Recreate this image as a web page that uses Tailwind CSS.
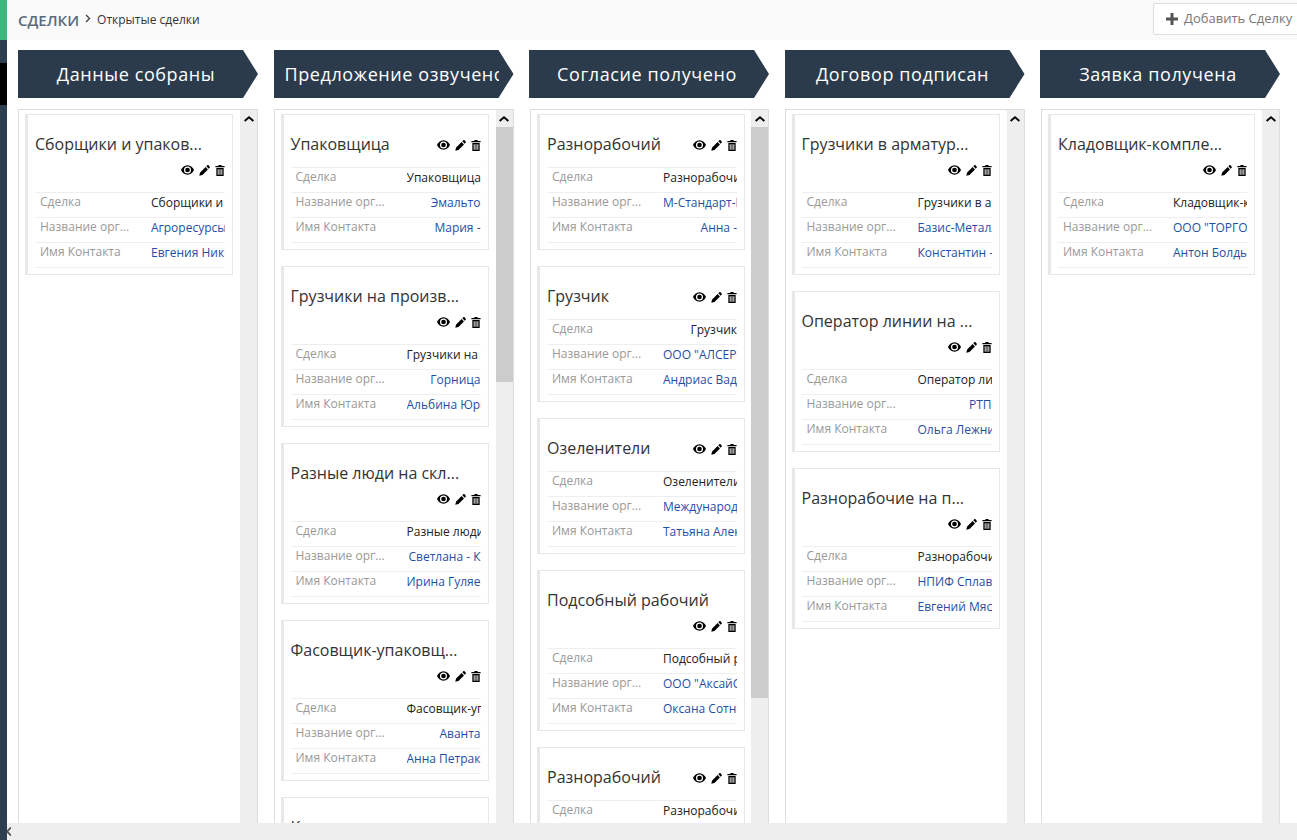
<!DOCTYPE html>
<html lang="ru">

<head>
    <meta charset="UTF-8">
    <meta name="viewport" content="width=device-width, initial-scale=1.0">
    <script src="https://cdn.jsdelivr.net/npm/@tailwindcss/browser@4"></script>
    <title>Сделки</title>
</head>

<body class="h-screen overflow-hidden bg-white font-['Open_Sans',sans-serif] flex">
    <svg class="hidden">
        <symbol id="i-eye" viewBox="0 0 14 10"><path fill-rule="evenodd" d="M7 0C3.6 0 1.1 2.6 0 5c1.1 2.4 3.6 5 7 5s5.900-2.600 7-5C12.900 2.600 10.400 0 7 0zm0 8.800A3.800 3.800 0 1 1 7 1.200a3.800 3.800 0 0 1 0 7.600z"/><circle cx="7" cy="5" r="2.500"/></symbol>
        <symbol id="i-pen" viewBox="0 0 12 12"><path d="M9 .4c.4-.4 1-.4 1.400 0l1.200 1.200c.4.4.4 1 0 1.400l-1 1L8 1.400zM7.200 2.200l2.600 2.600-6 6L.3 11.700l.9-3.500z"/></symbol>
        <symbol id="i-trash" viewBox="0 0 10 12"><path fill-rule="evenodd" d="M3.500 0h3l.5 1h3v1.500H0V1h3zM1 3.300h8V12H1zm1.500 1.200v6h1v-6zm2 0v6h1v-6zm2 0v6h1v-6z"/></symbol>
        <symbol id="i-up" viewBox="0 0 10 6"><path d="M5 0l5 4.300-1.300 1.400L5 2.500 1.300 5.700 0 4.300z"/></symbol>
    </svg>

    <!-- Боковая полоса -->
    <div class="w-[7px] shrink-0 flex flex-col bg-[#2c3e50]">
        <div class="h-[40px] bg-[#3fb77c]"></div>
        <div class="h-[23px]"></div>
        <div class="h-[42px] bg-black"></div>
    </div>

    <div class="flex-1 min-w-0 flex flex-col">
        <!-- Шапка -->
        <div class="h-[40px] shrink-0 bg-[#fafafa] flex items-center pl-[11px]">
            <span class="text-[15px] font-semibold text-[#5b6b7b]">СДЕЛКИ</span>
            <svg class="w-[6px] h-[9px] ml-[6px] mb-[3px] text-[#444]" viewBox="0 0 6 9" fill="none" stroke="currentColor" stroke-width="1.400"><path d="M1 1l3.500 3.500L1 8"/></svg>
            <span class="text-[12px] text-[#333] ml-[6px]">Открытые сделки</span>
            <button class="ml-auto -mr-[10px] mb-[3px] w-[154px] h-[32px] shrink-0 bg-white border border-[#ddd] rounded-[2px] flex items-center pl-[12px] text-[13px] text-[#777] whitespace-nowrap">
                <svg class="w-[12px] h-[12px] mr-[6px] text-[#555]" viewBox="0 0 12 12" fill="currentColor"><path d="M4.500 0h3v4.500H12v3H7.500V12h-3V7.500H0v-3h4.500z"/></svg>
                Добавить Сделку
            </button>
        </div>

        <!-- Колонки -->
        <div class="flex-1 min-h-0 flex gap-[15.5px] pl-[11px] pt-[10px]">

            <!-- Данные собраны -->
            <div class="w-[240px] shrink-0 flex flex-col">
                <div class="h-[48px] shrink-0 bg-[#2c3b4c] [clip-path:polygon(0_0,225px_0,240px_50%,225px_100%,0_100%)] pl-[11px]">
                    <div class="w-[214px] overflow-hidden whitespace-nowrap text-center text-[18px] leading-[48px] font-medium tracking-[0.6px] text-white">Данные собраны</div>
                </div>
                <div class="flex-1 min-h-0 mt-[11px] flex border border-b-0 border-[#ddd] overflow-hidden">
                    <div class="flex-1 min-w-0 pt-[4px] pl-[6px] pr-[7px] flex flex-col gap-[16px]">
                        <div class="shrink-0 bg-white border border-[#e8e8e8] border-l-[3px] pt-[17px] pl-[7px] pr-[7px] pb-[6px]">
                            <div class="flex flex-wrap justify-between items-center gap-y-[1px] mb-[11px]">
                                <div class="text-[16px] leading-[24px] text-[#333] whitespace-nowrap">Сборщики и упаков...</div>
                                <div class="ml-auto h-[24px] pt-[2px] flex items-center gap-[5px] text-[#333]"><svg class="w-[13px] h-[10px]"><use href="#i-eye"/></svg><svg class="w-[11px] h-[11px]"><use href="#i-pen"/></svg><svg class="w-[10px] h-[11px]"><use href="#i-trash"/></svg></div>
                            </div>
                            <div class="border-b border-[#eee] text-[12px]">
                                <div class="h-[25px] border-t border-[#eee] flex justify-between items-center"><span class="pl-[5px] pb-[6px] text-[#999]">Сделка</span><span class="w-[74px] pb-[4px] text-right overflow-hidden whitespace-nowrap text-[#222]">Сборщики и упаковщики</span></div>
                                <div class="h-[25px] border-t border-[#eee] flex justify-between items-center"><span class="pl-[5px] pb-[6px] text-[#999]">Название орг...</span><span class="w-[74px] pb-[4px] text-right overflow-hidden whitespace-nowrap text-[#1f4fa3]">Агроресурсы</span></div>
                                <div class="h-[25px] border-t border-[#eee] flex justify-between items-center"><span class="pl-[5px] pb-[6px] text-[#999]">Имя Контакта</span><span class="w-[74px] pb-[4px] text-right overflow-hidden whitespace-nowrap text-[#1f4fa3]">Евгения Никитина</span></div>
                            </div>
                        </div>
                    </div>
                    <div class="w-[17px] shrink-0 bg-[#eee] flex flex-col">
                        <div class="h-[17px] flex items-center justify-center text-[#777]"><svg class="w-[10px] h-[6px]"><use href="#i-up"/></svg></div>
                    </div>
                </div>
            </div>

            <!-- Предложение озвучено -->
            <div class="w-[240px] shrink-0 flex flex-col">
                <div class="h-[48px] shrink-0 bg-[#2c3b4c] [clip-path:polygon(0_0,225px_0,240px_50%,225px_100%,0_100%)] pl-[11px]">
                    <div class="w-[214px] overflow-hidden whitespace-nowrap text-center text-[18px] leading-[48px] font-medium tracking-[0.6px] text-white">Предложение озвучено</div>
                </div>
                <div class="flex-1 min-h-0 mt-[11px] flex border border-b-0 border-[#ddd] overflow-hidden">
                    <div class="flex-1 min-w-0 pt-[4px] pl-[6px] pr-[7px] flex flex-col gap-[16px]">
                        <div class="shrink-0 bg-white border border-[#e8e8e8] border-l-[3px] pt-[17px] pl-[7px] pr-[7px] pb-[6px]">
                            <div class="flex flex-wrap justify-between items-center gap-y-[1px] mb-[11px]">
                                <div class="text-[16px] leading-[24px] text-[#333] whitespace-nowrap">Упаковщица</div>
                                <div class="ml-auto h-[24px] pt-[2px] flex items-center gap-[5px] text-[#333]"><svg class="w-[13px] h-[10px]"><use href="#i-eye"/></svg><svg class="w-[11px] h-[11px]"><use href="#i-pen"/></svg><svg class="w-[10px] h-[11px]"><use href="#i-trash"/></svg></div>
                            </div>
                            <div class="border-b border-[#eee] text-[12px]">
                                <div class="h-[25px] border-t border-[#eee] flex justify-between items-center"><span class="pl-[5px] pb-[6px] text-[#999]">Сделка</span><span class="w-[74px] pb-[4px] text-right overflow-hidden whitespace-nowrap text-[#222]">Упаковщица</span></div>
                                <div class="h-[25px] border-t border-[#eee] flex justify-between items-center"><span class="pl-[5px] pb-[6px] text-[#999]">Название орг...</span><span class="w-[74px] pb-[4px] text-right overflow-hidden whitespace-nowrap text-[#1f4fa3]">Эмальто</span></div>
                                <div class="h-[25px] border-t border-[#eee] flex justify-between items-center"><span class="pl-[5px] pb-[6px] text-[#999]">Имя Контакта</span><span class="w-[74px] pb-[4px] text-right overflow-hidden whitespace-nowrap text-[#1f4fa3]">Мария -</span></div>
                            </div>
                        </div>
                        <div class="shrink-0 bg-white border border-[#e8e8e8] border-l-[3px] pt-[17px] pl-[7px] pr-[7px] pb-[6px]">
                            <div class="flex flex-wrap justify-between items-center gap-y-[1px] mb-[11px]">
                                <div class="text-[16px] leading-[24px] text-[#333] whitespace-nowrap">Грузчики на произв...</div>
                                <div class="ml-auto h-[24px] pt-[2px] flex items-center gap-[5px] text-[#333]"><svg class="w-[13px] h-[10px]"><use href="#i-eye"/></svg><svg class="w-[11px] h-[11px]"><use href="#i-pen"/></svg><svg class="w-[10px] h-[11px]"><use href="#i-trash"/></svg></div>
                            </div>
                            <div class="border-b border-[#eee] text-[12px]">
                                <div class="h-[25px] border-t border-[#eee] flex justify-between items-center"><span class="pl-[5px] pb-[6px] text-[#999]">Сделка</span><span class="w-[74px] pb-[4px] text-right overflow-hidden whitespace-nowrap text-[#222]">Грузчики на производство</span></div>
                                <div class="h-[25px] border-t border-[#eee] flex justify-between items-center"><span class="pl-[5px] pb-[6px] text-[#999]">Название орг...</span><span class="w-[74px] pb-[4px] text-right overflow-hidden whitespace-nowrap text-[#1f4fa3]">Горница</span></div>
                                <div class="h-[25px] border-t border-[#eee] flex justify-between items-center"><span class="pl-[5px] pb-[6px] text-[#999]">Имя Контакта</span><span class="w-[74px] pb-[4px] text-right overflow-hidden whitespace-nowrap text-[#1f4fa3]">Альбина Юрьевна</span></div>
                            </div>
                        </div>
                        <div class="shrink-0 bg-white border border-[#e8e8e8] border-l-[3px] pt-[17px] pl-[7px] pr-[7px] pb-[6px]">
                            <div class="flex flex-wrap justify-between items-center gap-y-[1px] mb-[11px]">
                                <div class="text-[16px] leading-[24px] text-[#333] whitespace-nowrap">Разные люди на скл...</div>
                                <div class="ml-auto h-[24px] pt-[2px] flex items-center gap-[5px] text-[#333]"><svg class="w-[13px] h-[10px]"><use href="#i-eye"/></svg><svg class="w-[11px] h-[11px]"><use href="#i-pen"/></svg><svg class="w-[10px] h-[11px]"><use href="#i-trash"/></svg></div>
                            </div>
                            <div class="border-b border-[#eee] text-[12px]">
                                <div class="h-[25px] border-t border-[#eee] flex justify-between items-center"><span class="pl-[5px] pb-[6px] text-[#999]">Сделка</span><span class="w-[74px] pb-[4px] text-right overflow-hidden whitespace-nowrap text-[#222]">Разные люди на склад</span></div>
                                <div class="h-[25px] border-t border-[#eee] flex justify-between items-center"><span class="pl-[5px] pb-[6px] text-[#999]">Название орг...</span><span class="w-[74px] pb-[4px] text-right overflow-hidden whitespace-nowrap text-[#1f4fa3]">Светлана - К</span></div>
                                <div class="h-[25px] border-t border-[#eee] flex justify-between items-center"><span class="pl-[5px] pb-[6px] text-[#999]">Имя Контакта</span><span class="w-[74px] pb-[4px] text-right overflow-hidden whitespace-nowrap text-[#1f4fa3]">Ирина Гуляева</span></div>
                            </div>
                        </div>
                        <div class="shrink-0 bg-white border border-[#e8e8e8] border-l-[3px] pt-[17px] pl-[7px] pr-[7px] pb-[6px]">
                            <div class="flex flex-wrap justify-between items-center gap-y-[1px] mb-[11px]">
                                <div class="text-[16px] leading-[24px] text-[#333] whitespace-nowrap">Фасовщик-упаковщ...</div>
                                <div class="ml-auto h-[24px] pt-[2px] flex items-center gap-[5px] text-[#333]"><svg class="w-[13px] h-[10px]"><use href="#i-eye"/></svg><svg class="w-[11px] h-[11px]"><use href="#i-pen"/></svg><svg class="w-[10px] h-[11px]"><use href="#i-trash"/></svg></div>
                            </div>
                            <div class="border-b border-[#eee] text-[12px]">
                                <div class="h-[25px] border-t border-[#eee] flex justify-between items-center"><span class="pl-[5px] pb-[6px] text-[#999]">Сделка</span><span class="w-[74px] pb-[4px] text-right overflow-hidden whitespace-nowrap text-[#222]">Фасовщик-упаковщик</span></div>
                                <div class="h-[25px] border-t border-[#eee] flex justify-between items-center"><span class="pl-[5px] pb-[6px] text-[#999]">Название орг...</span><span class="w-[74px] pb-[4px] text-right overflow-hidden whitespace-nowrap text-[#1f4fa3]">Аванта</span></div>
                                <div class="h-[25px] border-t border-[#eee] flex justify-between items-center"><span class="pl-[5px] pb-[6px] text-[#999]">Имя Контакта</span><span class="w-[74px] pb-[4px] text-right overflow-hidden whitespace-nowrap text-[#1f4fa3]">Анна Петракова</span></div>
                            </div>
                        </div>
                        <div class="shrink-0 bg-white border border-[#e8e8e8] border-l-[3px] pt-[17px] pl-[7px] pr-[7px] pb-[6px]">
                            <div class="flex flex-wrap justify-between items-center gap-y-[1px] mb-[11px]">
                                <div class="text-[16px] leading-[24px] text-[#333] whitespace-nowrap">Комплектовщик</div>
                                <div class="ml-auto h-[24px] pt-[2px] flex items-center gap-[5px] text-[#333]"><svg class="w-[13px] h-[10px]"><use href="#i-eye"/></svg><svg class="w-[11px] h-[11px]"><use href="#i-pen"/></svg><svg class="w-[10px] h-[11px]"><use href="#i-trash"/></svg></div>
                            </div>
                        </div>
                    </div>
                    <div class="w-[17px] shrink-0 bg-[#eee] flex flex-col">
                        <div class="h-[17px] flex items-center justify-center text-[#777]"><svg class="w-[10px] h-[6px]"><use href="#i-up"/></svg></div>
                        <div class="h-[255px] bg-[#ccc]"></div>
                    </div>
                </div>
            </div>

            <!-- Согласие получено -->
            <div class="w-[240px] shrink-0 flex flex-col">
                <div class="h-[48px] shrink-0 bg-[#2c3b4c] [clip-path:polygon(0_0,225px_0,240px_50%,225px_100%,0_100%)] pl-[11px]">
                    <div class="w-[214px] overflow-hidden whitespace-nowrap text-center text-[18px] leading-[48px] font-medium tracking-[0.6px] text-white">Согласие получено</div>
                </div>
                <div class="flex-1 min-h-0 mt-[11px] ml-[1px] flex border border-b-0 border-[#ddd] overflow-hidden">
                    <div class="flex-1 min-w-0 pt-[4px] pl-[6px] pr-[6px] flex flex-col gap-[16px]">
                        <div class="shrink-0 bg-white border border-[#e8e8e8] border-l-[3px] pt-[17px] pl-[7px] pr-[7px] pb-[6px]">
                            <div class="flex flex-wrap justify-between items-center gap-y-[1px] mb-[11px]">
                                <div class="text-[16px] leading-[24px] text-[#333] whitespace-nowrap">Разнорабочий</div>
                                <div class="ml-auto h-[24px] pt-[2px] flex items-center gap-[5px] text-[#333]"><svg class="w-[13px] h-[10px]"><use href="#i-eye"/></svg><svg class="w-[11px] h-[11px]"><use href="#i-pen"/></svg><svg class="w-[10px] h-[11px]"><use href="#i-trash"/></svg></div>
                            </div>
                            <div class="border-b border-[#eee] text-[12px]">
                                <div class="h-[25px] border-t border-[#eee] flex justify-between items-center"><span class="pl-[5px] pb-[6px] text-[#999]">Сделка</span><span class="w-[74px] pb-[4px] text-right overflow-hidden whitespace-nowrap text-[#222]">Разнорабочий</span></div>
                                <div class="h-[25px] border-t border-[#eee] flex justify-between items-center"><span class="pl-[5px] pb-[6px] text-[#999]">Название орг...</span><span class="w-[74px] pb-[4px] text-right overflow-hidden whitespace-nowrap text-[#1f4fa3]">М-Стандарт-Груп</span></div>
                                <div class="h-[25px] border-t border-[#eee] flex justify-between items-center"><span class="pl-[5px] pb-[6px] text-[#999]">Имя Контакта</span><span class="w-[74px] pb-[4px] text-right overflow-hidden whitespace-nowrap text-[#1f4fa3]">Анна -</span></div>
                            </div>
                        </div>
                        <div class="shrink-0 bg-white border border-[#e8e8e8] border-l-[3px] pt-[17px] pl-[7px] pr-[7px] pb-[6px]">
                            <div class="flex flex-wrap justify-between items-center gap-y-[1px] mb-[11px]">
                                <div class="text-[16px] leading-[24px] text-[#333] whitespace-nowrap">Грузчик</div>
                                <div class="ml-auto h-[24px] pt-[2px] flex items-center gap-[5px] text-[#333]"><svg class="w-[13px] h-[10px]"><use href="#i-eye"/></svg><svg class="w-[11px] h-[11px]"><use href="#i-pen"/></svg><svg class="w-[10px] h-[11px]"><use href="#i-trash"/></svg></div>
                            </div>
                            <div class="border-b border-[#eee] text-[12px]">
                                <div class="h-[25px] border-t border-[#eee] flex justify-between items-center"><span class="pl-[5px] pb-[6px] text-[#999]">Сделка</span><span class="w-[74px] pb-[4px] text-right overflow-hidden whitespace-nowrap text-[#222]">Грузчик</span></div>
                                <div class="h-[25px] border-t border-[#eee] flex justify-between items-center"><span class="pl-[5px] pb-[6px] text-[#999]">Название орг...</span><span class="w-[74px] pb-[4px] text-right overflow-hidden whitespace-nowrap text-[#1f4fa3]">ООО "АЛСЕРВИС"</span></div>
                                <div class="h-[25px] border-t border-[#eee] flex justify-between items-center"><span class="pl-[5px] pb-[6px] text-[#999]">Имя Контакта</span><span class="w-[74px] pb-[4px] text-right overflow-hidden whitespace-nowrap text-[#1f4fa3]">Андриас Вадимович</span></div>
                            </div>
                        </div>
                        <div class="shrink-0 bg-white border border-[#e8e8e8] border-l-[3px] pt-[17px] pl-[7px] pr-[7px] pb-[6px]">
                            <div class="flex flex-wrap justify-between items-center gap-y-[1px] mb-[11px]">
                                <div class="text-[16px] leading-[24px] text-[#333] whitespace-nowrap">Озеленители</div>
                                <div class="ml-auto h-[24px] pt-[2px] flex items-center gap-[5px] text-[#333]"><svg class="w-[13px] h-[10px]"><use href="#i-eye"/></svg><svg class="w-[11px] h-[11px]"><use href="#i-pen"/></svg><svg class="w-[10px] h-[11px]"><use href="#i-trash"/></svg></div>
                            </div>
                            <div class="border-b border-[#eee] text-[12px]">
                                <div class="h-[25px] border-t border-[#eee] flex justify-between items-center"><span class="pl-[5px] pb-[6px] text-[#999]">Сделка</span><span class="w-[74px] pb-[4px] text-right overflow-hidden whitespace-nowrap text-[#222]">Озеленители</span></div>
                                <div class="h-[25px] border-t border-[#eee] flex justify-between items-center"><span class="pl-[5px] pb-[6px] text-[#999]">Название орг...</span><span class="w-[74px] pb-[4px] text-right overflow-hidden whitespace-nowrap text-[#1f4fa3]">Международный</span></div>
                                <div class="h-[25px] border-t border-[#eee] flex justify-between items-center"><span class="pl-[5px] pb-[6px] text-[#999]">Имя Контакта</span><span class="w-[74px] pb-[4px] text-right overflow-hidden whitespace-nowrap text-[#1f4fa3]">Татьяна Алексеевна</span></div>
                            </div>
                        </div>
                        <div class="shrink-0 bg-white border border-[#e8e8e8] border-l-[3px] pt-[17px] pl-[7px] pr-[7px] pb-[6px]">
                            <div class="flex flex-wrap justify-between items-center gap-y-[1px] mb-[11px]">
                                <div class="text-[16px] leading-[24px] text-[#333] whitespace-nowrap">Подсобный рабочий</div>
                                <div class="ml-auto h-[24px] pt-[2px] flex items-center gap-[5px] text-[#333]"><svg class="w-[13px] h-[10px]"><use href="#i-eye"/></svg><svg class="w-[11px] h-[11px]"><use href="#i-pen"/></svg><svg class="w-[10px] h-[11px]"><use href="#i-trash"/></svg></div>
                            </div>
                            <div class="border-b border-[#eee] text-[12px]">
                                <div class="h-[25px] border-t border-[#eee] flex justify-between items-center"><span class="pl-[5px] pb-[6px] text-[#999]">Сделка</span><span class="w-[74px] pb-[4px] text-right overflow-hidden whitespace-nowrap text-[#222]">Подсобный рабочий</span></div>
                                <div class="h-[25px] border-t border-[#eee] flex justify-between items-center"><span class="pl-[5px] pb-[6px] text-[#999]">Название орг...</span><span class="w-[74px] pb-[4px] text-right overflow-hidden whitespace-nowrap text-[#1f4fa3]">ООО "АксайСтрой"</span></div>
                                <div class="h-[25px] border-t border-[#eee] flex justify-between items-center"><span class="pl-[5px] pb-[6px] text-[#999]">Имя Контакта</span><span class="w-[74px] pb-[4px] text-right overflow-hidden whitespace-nowrap text-[#1f4fa3]">Оксана Сотникова</span></div>
                            </div>
                        </div>
                        <div class="shrink-0 bg-white border border-[#e8e8e8] border-l-[3px] pt-[17px] pl-[7px] pr-[7px] pb-[6px]">
                            <div class="flex flex-wrap justify-between items-center gap-y-[1px] mb-[11px]">
                                <div class="text-[16px] leading-[24px] text-[#333] whitespace-nowrap">Разнорабочий</div>
                                <div class="ml-auto h-[24px] pt-[2px] flex items-center gap-[5px] text-[#333]"><svg class="w-[13px] h-[10px]"><use href="#i-eye"/></svg><svg class="w-[11px] h-[11px]"><use href="#i-pen"/></svg><svg class="w-[10px] h-[11px]"><use href="#i-trash"/></svg></div>
                            </div>
                            <div class="border-b border-[#eee] text-[12px]">
                                <div class="h-[25px] border-t border-[#eee] flex justify-between items-center"><span class="pl-[5px] pb-[6px] text-[#999]">Сделка</span><span class="w-[74px] pb-[4px] text-right overflow-hidden whitespace-nowrap text-[#222]">Разнорабочий</span></div>
                            </div>
                        </div>
                    </div>
                    <div class="w-[17px] shrink-0 bg-[#eee] flex flex-col">
                        <div class="h-[17px] flex items-center justify-center text-[#777]"><svg class="w-[10px] h-[6px]"><use href="#i-up"/></svg></div>
                        <div class="h-[571px] bg-[#ccc]"></div>
                    </div>
                </div>
            </div>

            <!-- Договор подписан -->
            <div class="w-[240px] shrink-0 flex flex-col">
                <div class="h-[48px] shrink-0 bg-[#2c3b4c] [clip-path:polygon(0_0,225px_0,240px_50%,225px_100%,0_100%)] pl-[11px]">
                    <div class="w-[214px] overflow-hidden whitespace-nowrap text-center text-[18px] leading-[48px] font-medium tracking-[0.6px] text-white">Договор подписан</div>
                </div>
                <div class="flex-1 min-h-0 mt-[11px] flex border border-b-0 border-[#ddd] overflow-hidden">
                    <div class="flex-1 min-w-0 pt-[4px] pl-[6px] pr-[7px] flex flex-col gap-[16px]">
                        <div class="shrink-0 bg-white border border-[#e8e8e8] border-l-[3px] pt-[17px] pl-[7px] pr-[7px] pb-[6px]">
                            <div class="flex flex-wrap justify-between items-center gap-y-[1px] mb-[11px]">
                                <div class="text-[16px] leading-[24px] text-[#333] whitespace-nowrap">Грузчики в арматур...</div>
                                <div class="ml-auto h-[24px] pt-[2px] flex items-center gap-[5px] text-[#333]"><svg class="w-[13px] h-[10px]"><use href="#i-eye"/></svg><svg class="w-[11px] h-[11px]"><use href="#i-pen"/></svg><svg class="w-[10px] h-[11px]"><use href="#i-trash"/></svg></div>
                            </div>
                            <div class="border-b border-[#eee] text-[12px]">
                                <div class="h-[25px] border-t border-[#eee] flex justify-between items-center"><span class="pl-[5px] pb-[6px] text-[#999]">Сделка</span><span class="w-[74px] pb-[4px] text-right overflow-hidden whitespace-nowrap text-[#222]">Грузчики в арматурный</span></div>
                                <div class="h-[25px] border-t border-[#eee] flex justify-between items-center"><span class="pl-[5px] pb-[6px] text-[#999]">Название орг...</span><span class="w-[74px] pb-[4px] text-right overflow-hidden whitespace-nowrap text-[#1f4fa3]">Базис-Металл</span></div>
                                <div class="h-[25px] border-t border-[#eee] flex justify-between items-center"><span class="pl-[5px] pb-[6px] text-[#999]">Имя Контакта</span><span class="w-[74px] pb-[4px] text-right overflow-hidden whitespace-nowrap text-[#1f4fa3]">Константин -</span></div>
                            </div>
                        </div>
                        <div class="shrink-0 bg-white border border-[#e8e8e8] border-l-[3px] pt-[17px] pl-[7px] pr-[7px] pb-[6px]">
                            <div class="flex flex-wrap justify-between items-center gap-y-[1px] mb-[11px]">
                                <div class="text-[16px] leading-[24px] text-[#333] whitespace-nowrap">Оператор линии на ...</div>
                                <div class="ml-auto h-[24px] pt-[2px] flex items-center gap-[5px] text-[#333]"><svg class="w-[13px] h-[10px]"><use href="#i-eye"/></svg><svg class="w-[11px] h-[11px]"><use href="#i-pen"/></svg><svg class="w-[10px] h-[11px]"><use href="#i-trash"/></svg></div>
                            </div>
                            <div class="border-b border-[#eee] text-[12px]">
                                <div class="h-[25px] border-t border-[#eee] flex justify-between items-center"><span class="pl-[5px] pb-[6px] text-[#999]">Сделка</span><span class="w-[74px] pb-[4px] text-right overflow-hidden whitespace-nowrap text-[#222]">Оператор линии</span></div>
                                <div class="h-[25px] border-t border-[#eee] flex justify-between items-center"><span class="pl-[5px] pb-[6px] text-[#999]">Название орг...</span><span class="w-[74px] pb-[4px] text-right overflow-hidden whitespace-nowrap text-[#1f4fa3]">РТП</span></div>
                                <div class="h-[25px] border-t border-[#eee] flex justify-between items-center"><span class="pl-[5px] pb-[6px] text-[#999]">Имя Контакта</span><span class="w-[74px] pb-[4px] text-right overflow-hidden whitespace-nowrap text-[#1f4fa3]">Ольга Лежнина</span></div>
                            </div>
                        </div>
                        <div class="shrink-0 bg-white border border-[#e8e8e8] border-l-[3px] pt-[17px] pl-[7px] pr-[7px] pb-[6px]">
                            <div class="flex flex-wrap justify-between items-center gap-y-[1px] mb-[11px]">
                                <div class="text-[16px] leading-[24px] text-[#333] whitespace-nowrap">Разнорабочие на п...</div>
                                <div class="ml-auto h-[24px] pt-[2px] flex items-center gap-[5px] text-[#333]"><svg class="w-[13px] h-[10px]"><use href="#i-eye"/></svg><svg class="w-[11px] h-[11px]"><use href="#i-pen"/></svg><svg class="w-[10px] h-[11px]"><use href="#i-trash"/></svg></div>
                            </div>
                            <div class="border-b border-[#eee] text-[12px]">
                                <div class="h-[25px] border-t border-[#eee] flex justify-between items-center"><span class="pl-[5px] pb-[6px] text-[#999]">Сделка</span><span class="w-[74px] pb-[4px] text-right overflow-hidden whitespace-nowrap text-[#222]">Разнорабочие на производство</span></div>
                                <div class="h-[25px] border-t border-[#eee] flex justify-between items-center"><span class="pl-[5px] pb-[6px] text-[#999]">Название орг...</span><span class="w-[74px] pb-[4px] text-right overflow-hidden whitespace-nowrap text-[#1f4fa3]">НПИФ Сплав</span></div>
                                <div class="h-[25px] border-t border-[#eee] flex justify-between items-center"><span class="pl-[5px] pb-[6px] text-[#999]">Имя Контакта</span><span class="w-[74px] pb-[4px] text-right overflow-hidden whitespace-nowrap text-[#1f4fa3]">Евгений Мясников</span></div>
                            </div>
                        </div>
                    </div>
                    <div class="w-[17px] shrink-0 bg-[#eee] flex flex-col">
                        <div class="h-[17px] flex items-center justify-center text-[#777]"><svg class="w-[10px] h-[6px]"><use href="#i-up"/></svg></div>
                    </div>
                </div>
            </div>

            <!-- Заявка получена -->
            <div class="w-[240px] shrink-0 flex flex-col">
                <div class="h-[48px] shrink-0 bg-[#2c3b4c] [clip-path:polygon(0_0,225px_0,240px_50%,225px_100%,0_100%)] pl-[11px]">
                    <div class="w-[214px] overflow-hidden whitespace-nowrap text-center text-[18px] leading-[48px] font-medium tracking-[0.6px] text-white">Заявка получена</div>
                </div>
                <div class="flex-1 min-h-0 mt-[11px] ml-[1px] flex border border-b-0 border-[#ddd] overflow-hidden">
                    <div class="flex-1 min-w-0 pt-[4px] pl-[6px] pr-[7px] flex flex-col gap-[16px]">
                        <div class="shrink-0 bg-white border border-[#e8e8e8] border-l-[3px] pt-[17px] pl-[7px] pr-[7px] pb-[6px]">
                            <div class="flex flex-wrap justify-between items-center gap-y-[1px] mb-[11px]">
                                <div class="text-[16px] leading-[24px] text-[#333] whitespace-nowrap">Кладовщик-компле...</div>
                                <div class="ml-auto h-[24px] pt-[2px] flex items-center gap-[5px] text-[#333]"><svg class="w-[13px] h-[10px]"><use href="#i-eye"/></svg><svg class="w-[11px] h-[11px]"><use href="#i-pen"/></svg><svg class="w-[10px] h-[11px]"><use href="#i-trash"/></svg></div>
                            </div>
                            <div class="border-b border-[#eee] text-[12px]">
                                <div class="h-[25px] border-t border-[#eee] flex justify-between items-center"><span class="pl-[5px] pb-[6px] text-[#999]">Сделка</span><span class="w-[74px] pb-[4px] text-right overflow-hidden whitespace-nowrap text-[#222]">Кладовщик-комплектовщик</span></div>
                                <div class="h-[25px] border-t border-[#eee] flex justify-between items-center"><span class="pl-[5px] pb-[6px] text-[#999]">Название орг...</span><span class="w-[74px] pb-[4px] text-right overflow-hidden whitespace-nowrap text-[#1f4fa3]">ООО "ТОРГОВЫЙ ДОМ"</span></div>
                                <div class="h-[25px] border-t border-[#eee] flex justify-between items-center"><span class="pl-[5px] pb-[6px] text-[#999]">Имя Контакта</span><span class="w-[74px] pb-[4px] text-right overflow-hidden whitespace-nowrap text-[#1f4fa3]">Антон Болдырев</span></div>
                            </div>
                        </div>
                    </div>
                    <div class="w-[17px] shrink-0 bg-[#eee] flex flex-col">
                        <div class="h-[17px] flex items-center justify-center text-[#777]"><svg class="w-[10px] h-[6px]"><use href="#i-up"/></svg></div>
                    </div>
                </div>
            </div>
        </div>

        <!-- Нижняя полоса прокрутки -->
        <div class="h-[17px] shrink-0 bg-[#eee] flex items-center">
            <svg class="w-[4px] h-[9px] text-[#555]" viewBox="3 0 4 9" fill="none" stroke="currentColor" stroke-width="1.800"><path d="M7 .5L3 4.500 7 8.500"/></svg>
        </div>
    </div>
</body>

</html>
